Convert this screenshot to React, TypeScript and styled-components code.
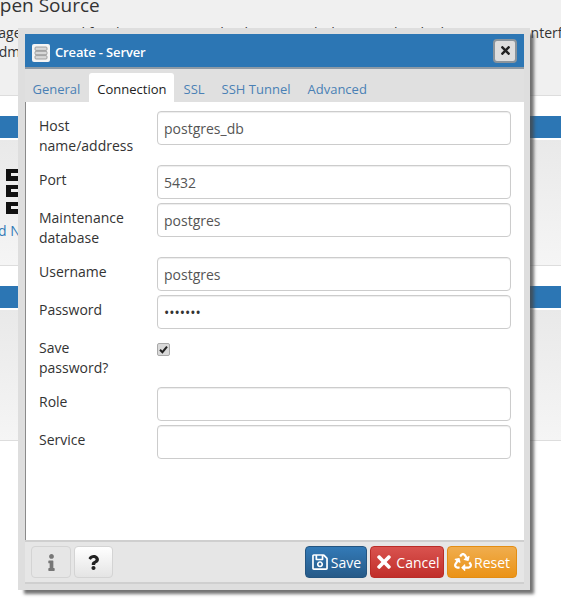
import React from 'react';
import styled, { createGlobalStyle } from 'styled-components';
import { FaTimes, FaInfo, FaQuestion, FaRegSave, FaRecycle } from 'react-icons/fa';

const FONT = `"Open Sans", "Noto Sans", sans-serif`;

const GlobalStyle = createGlobalStyle`
  html, body {
    margin: 0;
    padding: 0;
    background: #fff;
    font-family: ${FONT};
  }
`;

const Page = styled.div`
  position: relative;
  width: 561px;
  height: 616px;
  overflow: hidden;
  background: #fff;
`;

const Intro = styled.div`
  height: 96px;
  box-sizing: border-box;
  background: #f0f0f0;
  border-bottom: 1px solid #ddd;
  color: #333;
  white-space: nowrap;
  overflow: hidden;
`;

const IntroTitle = styled.div`
  font-size: 19px;
  line-height: 24px;
  margin: -7px 0 6px -15px;
  height: 24px;
`;

const IntroLine = styled.div<{ $indent: number }>`
  font-size: 14px;
  line-height: 19px;
  margin-left: ${(p) => p.$indent}px;
`;

const Section = styled.div<{ $height: number }>`
  margin-top: 20px;
  height: ${(p) => p.$height}px;
  display: flex;
  flex-direction: column;
`;

const SectionBar = styled.div`
  height: 22px;
  background: #2c76b4;
  flex: none;
`;

const SectionBody = styled.div`
  flex: 1;
  margin-top: 2px;
  background: linear-gradient(#e9e9e9, #f5f5f5);
  border-bottom: 1px solid #ddd;
  overflow: hidden;
`;

const LogoCut = styled.svg`
  display: block;
  margin: 29px 0 0 6px;
`;

const CutLink = styled.div`
  font-size: 14px;
  line-height: 20px;
  color: #337ab7;
  margin: 7px 0 0 -2px;
`;

const Modal = styled.div`
  position: absolute;
  left: 18px;
  top: 28px;
  width: 512px;
  height: 562px;
  box-sizing: border-box;
  background: #dedede;
  padding: 6px 6px 6px 7px;
  box-shadow: 5px 5px 3px -1px rgba(70, 70, 70, 0.75);
  display: flex;
  flex-direction: column;
`;

const TitleBar = styled.div`
  height: 35px;
  flex: none;
  box-sizing: border-box;
  background: #2c76b4;
  border-bottom: 2px solid #8e9aa5;
  display: flex;
  align-items: center;
  padding: 0 7px 0 7px;
  gap: 5px;
`;

const TitleIcon = styled.div`
  width: 18px;
  height: 18px;
  margin-top: 4px;
  border-radius: 2px;
  background: #f4f4f4;
  display: flex;
  align-items: center;
  justify-content: center;
`;

const TitleText = styled.div`
  flex: 1;
  color: #fff;
  font-size: 13px;
  font-weight: 600;
  letter-spacing: -0.15px;
  padding-top: 2px;
`;

const CloseButton = styled.button`
  width: 24px;
  height: 24px;
  padding: 0;
  box-sizing: border-box;
  border: 2px solid #8a949c;
  border-radius: 4px;
  background: #dedede;
  color: #222;
  display: flex;
  align-items: center;
  justify-content: center;
`;

const TabBar = styled.div`
  height: 33px;
  flex: none;
  background: #e0e0e0;
  display: flex;
  align-items: flex-end;
`;

const Tab = styled.div<{ $active?: boolean }>`
  height: 29px;
  box-sizing: border-box;
  padding: 0 ${(p) => (p.$active ? '7px' : '8.5px')} 0 8.5px;
  margin-right: ${(p) => (p.$active ? '1.5px' : '0')};
  line-height: 33px;
  font-size: 13px;
  color: ${(p) => (p.$active ? '#222' : '#4a80b5')};
  background: ${(p) => (p.$active ? '#fff' : 'transparent')};
  border-radius: 3px 3px 0 0;
  &:first-child {
    margin-left: -1px;
  }
`;

const Form = styled.div`
  flex: 1;
  background: #fff;
  border-left: 1px solid #8a8a8a;
  padding: 9px 13px 0 13px;
  display: flex;
  flex-direction: column;
  gap: 4px;
`;

const Row = styled.div`
  display: grid;
  grid-template-columns: 118px 1fr;
`;

const Label = styled.label`
  font-size: 14px;
  line-height: 20px;
  color: #333;
  padding: 5px 20px 5px 0;
`;

const Field = styled.div`
  height: 34px;
  box-sizing: border-box;
  border: 1px solid #ccc;
  border-radius: 4px;
  background: #fff;
  box-shadow: inset 0 1px 1px rgba(0, 0, 0, 0.075);
  padding: 0 6px;
  line-height: 33px;
  font-size: 14px;
  color: #555;
`;

const Dots = styled.span`
  font-size: 14px;
  color: #333;
`;

const CheckCell = styled.div`
  padding-top: 10px;
`;

const CheckBox = styled.div`
  width: 11px;
  height: 11px;
  border: 1px solid #a9a9a9;
  border-radius: 2px;
  background: #d9d9d9;
  display: flex;
  align-items: center;
  justify-content: center;
`;

const Footer = styled.div`
  height: 44px;
  flex: none;
  box-sizing: border-box;
  background: #e6e6e6;
  border-top: 2px solid #cfcfcf;
  border-bottom: 2px solid #cfcfcf;
  display: flex;
  align-items: flex-start;
  justify-content: space-between;
  padding: 4px 7px 0 6px;
`;

const ButtonGroup = styled.div<{ $gap: number }>`
  display: flex;
  gap: ${(p) => p.$gap}px;
`;

const HelpButton = styled.button<{ $disabled?: boolean }>`
  width: ${(p) => (p.$disabled ? 40 : 39)}px;
  height: 32px;
  padding: 0;
  box-sizing: border-box;
  border: 1px solid #d4d4d4;
  border-radius: 4px;
  background: ${(p) => (p.$disabled ? '#e6e6e6' : 'linear-gradient(#fff, #e4e4e4)')};
  color: ${(p) => (p.$disabled ? '#777' : '#222')};
  display: flex;
  align-items: center;
  justify-content: center;
`;

const ACTION_COLORS = {
  save: { top: '#337ab7', bottom: '#265a88', border: '#245580' },
  cancel: { top: '#d9534f', bottom: '#c12e2a', border: '#b92c28' },
  reset: { top: '#f0ad4e', bottom: '#eb9316', border: '#e38d13' },
};

const ActionButton = styled.button<{ $kind: keyof typeof ACTION_COLORS; $width: number }>`
  width: ${(p) => p.$width}px;
  height: 32px;
  padding: 0;
  box-sizing: border-box;
  border: 1px solid ${(p) => ACTION_COLORS[p.$kind].border};
  border-radius: 4px;
  background: linear-gradient(${(p) => ACTION_COLORS[p.$kind].top}, ${(p) => ACTION_COLORS[p.$kind].bottom});
  color: #fff;
  font-family: ${FONT};
  font-size: 14px;
  display: flex;
  align-items: center;
  justify-content: center;
  gap: 2px;
`;

const ServerIcon = () => (
  <svg width="14" height="14" viewBox="0 0 14 14">
    <rect x="1" y="1" width="12" height="3.4" rx="1" fill="#d8d8d8" stroke="#8f8f8f" strokeWidth="0.8" />
    <rect x="1" y="5.3" width="12" height="3.4" rx="1" fill="#d8d8d8" stroke="#8f8f8f" strokeWidth="0.8" />
    <rect x="1" y="9.6" width="12" height="3.4" rx="1" fill="#d8d8d8" stroke="#8f8f8f" strokeWidth="0.8" />
  </svg>
);

const CheckMark = () => (
  <svg width="9" height="9" viewBox="0 0 9 9">
    <path d="M1 4.8 L3.4 7.2 L8 1.6" fill="none" stroke="#222" strokeWidth="2" />
  </svg>
);

export default function App() {
  return (
    <Page>
      <GlobalStyle />
      <Intro>
        <IntroTitle>Open Source</IntroTitle>
        <IntroLine $indent={-31}>management tool for the PostgreSQL database. It includes a graphical administration interface</IntroLine>
        <IntroLine $indent={-9}>admin</IntroLine>
      </Intro>
      <Section $height={150}>
        <SectionBar />
        <SectionBody>
          <LogoCut width="13" height="45" viewBox="0 0 13 45">
            <path d="M0 0H13V4H5V7H13V12H0Z" fill="#111" />
            <path d="M0 16H13V20H5V23H13V28H0Z" fill="#111" />
            <path d="M0 33H13V37H5V40H13V45H0Z" fill="#111" />
          </LogoCut>
          <CutLink>d N</CutLink>
        </SectionBody>
      </Section>
      <Section $height={155}>
        <SectionBar />
        <SectionBody />
      </Section>
      <Modal>
        <TitleBar>
          <TitleIcon>
            <ServerIcon />
          </TitleIcon>
          <TitleText>Create - Server</TitleText>
          <CloseButton>
            <FaTimes size={13} />
          </CloseButton>
        </TitleBar>
        <TabBar>
          <Tab>General</Tab>
          <Tab $active>Connection</Tab>
          <Tab>SSL</Tab>
          <Tab>SSH Tunnel</Tab>
          <Tab>Advanced</Tab>
        </TabBar>
        <Form>
          <Row>
            <Label>Host name/address</Label>
            <Field>postgres_db</Field>
          </Row>
          <Row>
            <Label>Port</Label>
            <Field>5432</Field>
          </Row>
          <Row>
            <Label>Maintenance database</Label>
            <Field>postgres</Field>
          </Row>
          <Row>
            <Label>Username</Label>
            <Field>postgres</Field>
          </Row>
          <Row>
            <Label>Password</Label>
            <Field>
              <Dots>•••••••</Dots>
            </Field>
          </Row>
          <Row>
            <Label>Save password?</Label>
            <CheckCell>
              <CheckBox>
                <CheckMark />
              </CheckBox>
            </CheckCell>
          </Row>
          <Row>
            <Label>Role</Label>
            <Field />
          </Row>
          <Row>
            <Label>Service</Label>
            <Field />
          </Row>
        </Form>
        <Footer>
          <ButtonGroup $gap={3}>
            <HelpButton $disabled>
              <FaInfo size={17} />
            </HelpButton>
            <HelpButton>
              <FaQuestion size={15} />
            </HelpButton>
          </ButtonGroup>
          <ButtonGroup $gap={3}>
            <ActionButton $kind="save" $width={62}>
              <FaRegSave size={18} />
              Save
            </ActionButton>
            <ActionButton $kind="cancel" $width={74}>
              <FaTimes size={20} />
              Cancel
            </ActionButton>
            <ActionButton $kind="reset" $width={70}>
              <FaRecycle size={18} />
              Reset
            </ActionButton>
          </ButtonGroup>
        </Footer>
      </Modal>
    </Page>
  );
}
